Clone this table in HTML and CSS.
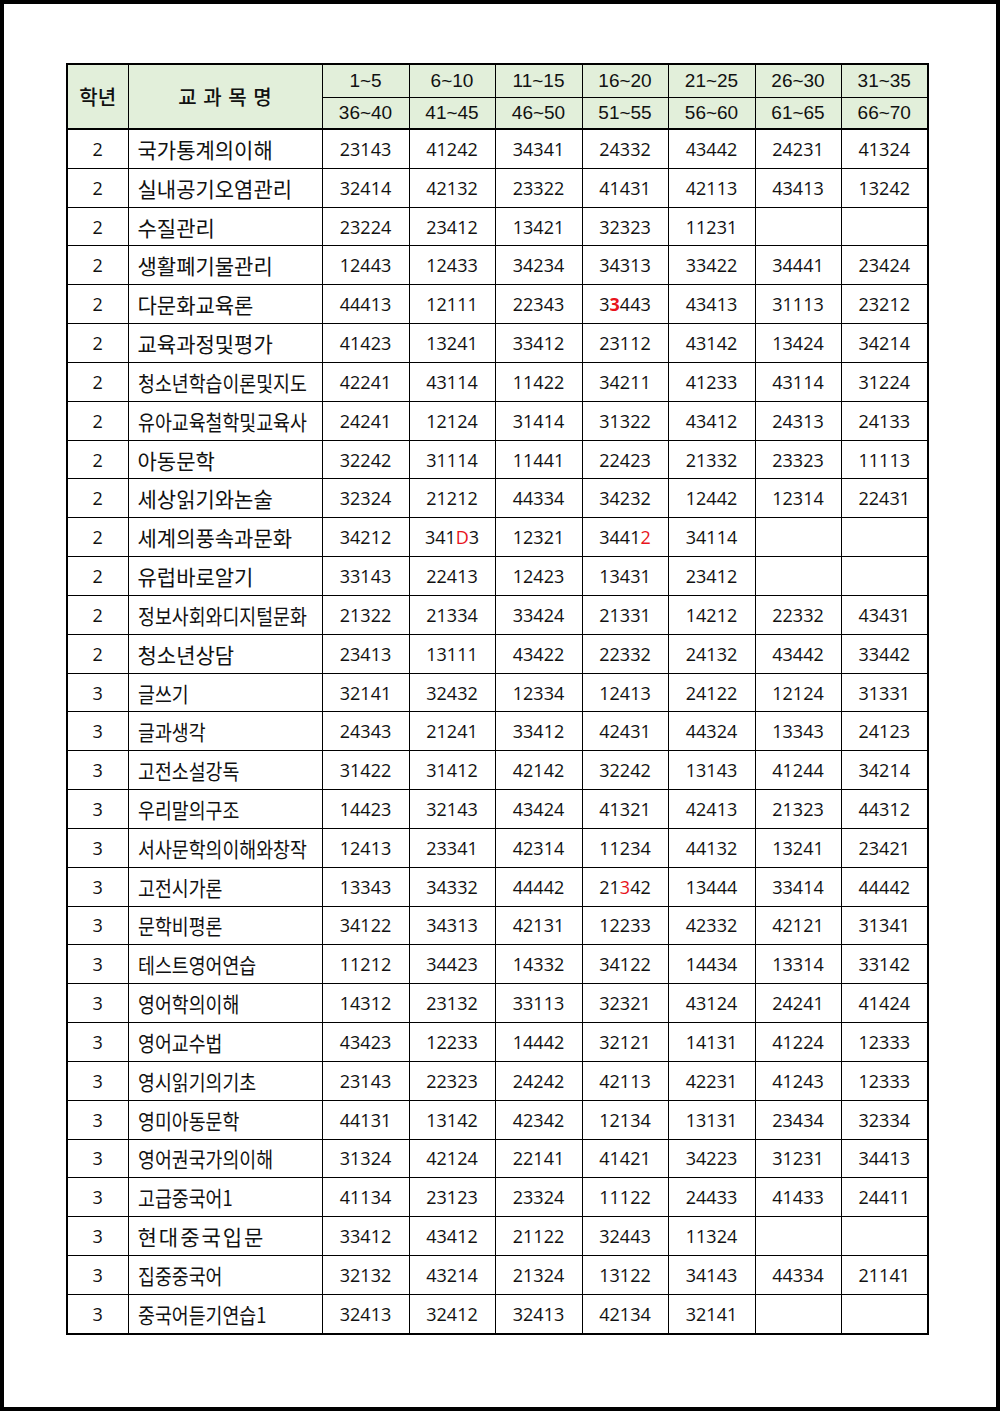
FILE: index.html
```html
<!DOCTYPE html>
<html lang="ko">
<head>
<meta charset="utf-8">
<title>교과목 정답표</title>
<link rel="stylesheet" href="styles.css">
</head>
<body>
<div class="page">
<table class="grid">
<colgroup>
<col class="c-grade"><col class="c-name">
<col class="c-n"><col class="c-n2"><col class="c-n"><col class="c-n2"><col class="c-n"><col class="c-n2"><col class="c-n">
</colgroup>
<thead>
<tr class="h1">
<th rowspan="2" class="hk">학년</th>
<th rowspan="2" class="hk spaced">교 과 목 명</th>
<th>1~5</th><th>6~10</th><th>11~15</th><th>16~20</th><th>21~25</th><th>26~30</th><th>31~35</th>
</tr>
<tr class="h2">
<th>36~40</th><th>41~45</th><th>46~50</th><th>51~55</th><th>56~60</th><th>61~65</th><th>66~70</th>
</tr>
</thead>
<tbody>
<tr><td class="g">2</td><td class="nm">국가통계의이해</td><td>23143</td><td>41242</td><td>34341</td><td>24332</td><td>43442</td><td>24231</td><td>41324</td></tr>
<tr><td class="g">2</td><td class="nm">실내공기오염관리</td><td>32414</td><td>42132</td><td>23322</td><td>41431</td><td>42113</td><td>43413</td><td>13242</td></tr>
<tr><td class="g">2</td><td class="nm">수질관리</td><td>23224</td><td>23412</td><td>13421</td><td>32323</td><td>11231</td><td></td><td></td></tr>
<tr><td class="g">2</td><td class="nm">생활폐기물관리</td><td>12443</td><td>12433</td><td>34234</td><td>34313</td><td>33422</td><td>34441</td><td>23424</td></tr>
<tr><td class="g">2</td><td class="nm">다문화교육론</td><td>44413</td><td>12111</td><td>22343</td><td>3<span class="red bold">3</span>443</td><td>43413</td><td>31113</td><td>23212</td></tr>
<tr><td class="g">2</td><td class="nm">교육과정및평가</td><td>41423</td><td>13241</td><td>33412</td><td>23112</td><td>43142</td><td>13424</td><td>34214</td></tr>
<tr><td class="g">2</td><td class="nm"><span class="cond">청소년학습이론및지도</span></td><td>42241</td><td>43114</td><td>11422</td><td>34211</td><td>41233</td><td>43114</td><td>31224</td></tr>
<tr><td class="g">2</td><td class="nm"><span class="cond">유아교육철학및교육사</span></td><td>24241</td><td>12124</td><td>31414</td><td>31322</td><td>43412</td><td>24313</td><td>24133</td></tr>
<tr><td class="g">2</td><td class="nm">아동문학</td><td>32242</td><td>31114</td><td>11441</td><td>22423</td><td>21332</td><td>23323</td><td>11113</td></tr>
<tr><td class="g">2</td><td class="nm">세상읽기와논술</td><td>32324</td><td>21212</td><td>44334</td><td>34232</td><td>12442</td><td>12314</td><td>22431</td></tr>
<tr><td class="g">2</td><td class="nm">세계의풍속과문화</td><td>34212</td><td>341<span class="red">D</span>3</td><td>12321</td><td>3441<span class="red">2</span></td><td>34114</td><td></td><td></td></tr>
<tr><td class="g">2</td><td class="nm">유럽바로알기</td><td>33143</td><td>22413</td><td>12423</td><td>13431</td><td>23412</td><td></td><td></td></tr>
<tr><td class="g">2</td><td class="nm"><span class="cond">정보사회와디지털문화</span></td><td>21322</td><td>21334</td><td>33424</td><td>21331</td><td>14212</td><td>22332</td><td>43431</td></tr>
<tr><td class="g">2</td><td class="nm">청소년상담</td><td>23413</td><td>13111</td><td>43422</td><td>22332</td><td>24132</td><td>43442</td><td>33442</td></tr>
<tr><td class="g">3</td><td class="nm"><span class="cond">글쓰기</span></td><td>32141</td><td>32432</td><td>12334</td><td>12413</td><td>24122</td><td>12124</td><td>31331</td></tr>
<tr><td class="g">3</td><td class="nm"><span class="cond">글과생각</span></td><td>24343</td><td>21241</td><td>33412</td><td>42431</td><td>44324</td><td>13343</td><td>24123</td></tr>
<tr><td class="g">3</td><td class="nm"><span class="cond">고전소설강독</span></td><td>31422</td><td>31412</td><td>42142</td><td>32242</td><td>13143</td><td>41244</td><td>34214</td></tr>
<tr><td class="g">3</td><td class="nm"><span class="cond">우리말의구조</span></td><td>14423</td><td>32143</td><td>43424</td><td>41321</td><td>42413</td><td>21323</td><td>44312</td></tr>
<tr><td class="g">3</td><td class="nm"><span class="cond">서사문학의이해와창작</span></td><td>12413</td><td>23341</td><td>42314</td><td>11234</td><td>44132</td><td>13241</td><td>23421</td></tr>
<tr><td class="g">3</td><td class="nm"><span class="cond">고전시가론</span></td><td>13343</td><td>34332</td><td>44442</td><td>21<span class="red">3</span>42</td><td>13444</td><td>33414</td><td>44442</td></tr>
<tr><td class="g">3</td><td class="nm"><span class="cond">문학비평론</span></td><td>34122</td><td>34313</td><td>42131</td><td>12233</td><td>42332</td><td>42121</td><td>31341</td></tr>
<tr><td class="g">3</td><td class="nm"><span class="cond">테스트영어연습</span></td><td>11212</td><td>34423</td><td>14332</td><td>34122</td><td>14434</td><td>13314</td><td>33142</td></tr>
<tr><td class="g">3</td><td class="nm"><span class="cond">영어학의이해</span></td><td>14312</td><td>23132</td><td>33113</td><td>32321</td><td>43124</td><td>24241</td><td>41424</td></tr>
<tr><td class="g">3</td><td class="nm"><span class="cond">영어교수법</span></td><td>43423</td><td>12233</td><td>14442</td><td>32121</td><td>14131</td><td>41224</td><td>12333</td></tr>
<tr><td class="g">3</td><td class="nm"><span class="cond">영시읽기의기초</span></td><td>23143</td><td>22323</td><td>24242</td><td>42113</td><td>42231</td><td>41243</td><td>12333</td></tr>
<tr><td class="g">3</td><td class="nm"><span class="cond">영미아동문학</span></td><td>44131</td><td>13142</td><td>42342</td><td>12134</td><td>13131</td><td>23434</td><td>32334</td></tr>
<tr><td class="g">3</td><td class="nm"><span class="cond">영어권국가의이해</span></td><td>31324</td><td>42124</td><td>22141</td><td>41421</td><td>34223</td><td>31231</td><td>34413</td></tr>
<tr><td class="g">3</td><td class="nm"><span class="cond">고급중국어1</span></td><td>41134</td><td>23123</td><td>23324</td><td>11122</td><td>24433</td><td>41433</td><td>24411</td></tr>
<tr><td class="g">3</td><td class="nm"><span class="wide">현대중국입문</span></td><td>33412</td><td>43412</td><td>21122</td><td>32443</td><td>11324</td><td></td><td></td></tr>
<tr><td class="g">3</td><td class="nm"><span class="cond">집중중국어</span></td><td>32132</td><td>43214</td><td>21324</td><td>13122</td><td>34143</td><td>44334</td><td>21141</td></tr>
<tr><td class="g">3</td><td class="nm"><span class="cond">중국어듣기연습1</span></td><td>32413</td><td>32412</td><td>32413</td><td>42134</td><td>32141</td><td></td><td></td></tr>
</tbody>
</table>
</div>
</body>
</html>
```

FILE: styles.css
```css
html, body {
  margin: 0;
  padding: 0;
  background: #ffffff;
}

.page {
  box-sizing: border-box;
  width: 1000px;
  height: 1411px;
  border: 4px solid #000;
  padding: 59px 0 0 62px;
  background: #fff;
}

.grid {
  border-collapse: collapse;
  table-layout: fixed;
  width: 861px;
  border: 2px solid #000;
  color: #111;
}

.c-grade { width: 61px; }
.c-name { width: 194px; }
.c-n { width: 87px; }
.c-n2 { width: 86px; }

.grid th,
.grid td {
  border: 1px solid #000;
  padding: 0;
  text-align: center;
  vertical-align: middle;
  white-space: nowrap;
  overflow: hidden;
}

.grid thead th {
  background: #e2efda;
  font-family: "Liberation Sans", Arial, sans-serif;
  font-weight: normal;
  font-size: 19px;
  line-height: 20px;
  color: #111;
}

.grid thead .hk {
  font-family: "Noto Sans CJK KR", sans-serif;
  font-weight: 500;
  font-size: 20px;
}

.grid thead .spaced {
  word-spacing: 1px;
}

.h1 th { height: 32px; }
.h2 th { height: 30px; }

.grid thead tr.h2 th,
.grid thead th.hk {
  border-bottom: 2px solid #000;
}

.grid tbody td {
  height: 37.84px;
  font-family: "Open Sans", sans-serif;
  font-size: 18px;
  line-height: 20px;
}

.grid tbody td.nm {
  text-align: left;
  padding-left: 9px;
  font-family: "Noto Sans CJK KR", sans-serif;
  font-size: 21px;
}

.cond {
  display: inline-block;
  transform: scaleX(0.874);
  transform-origin: left center;
}

.wide {
  letter-spacing: 2px;
}

.red {
  color: #e8141c;
}

.bold {
  font-weight: bold;
}
```
